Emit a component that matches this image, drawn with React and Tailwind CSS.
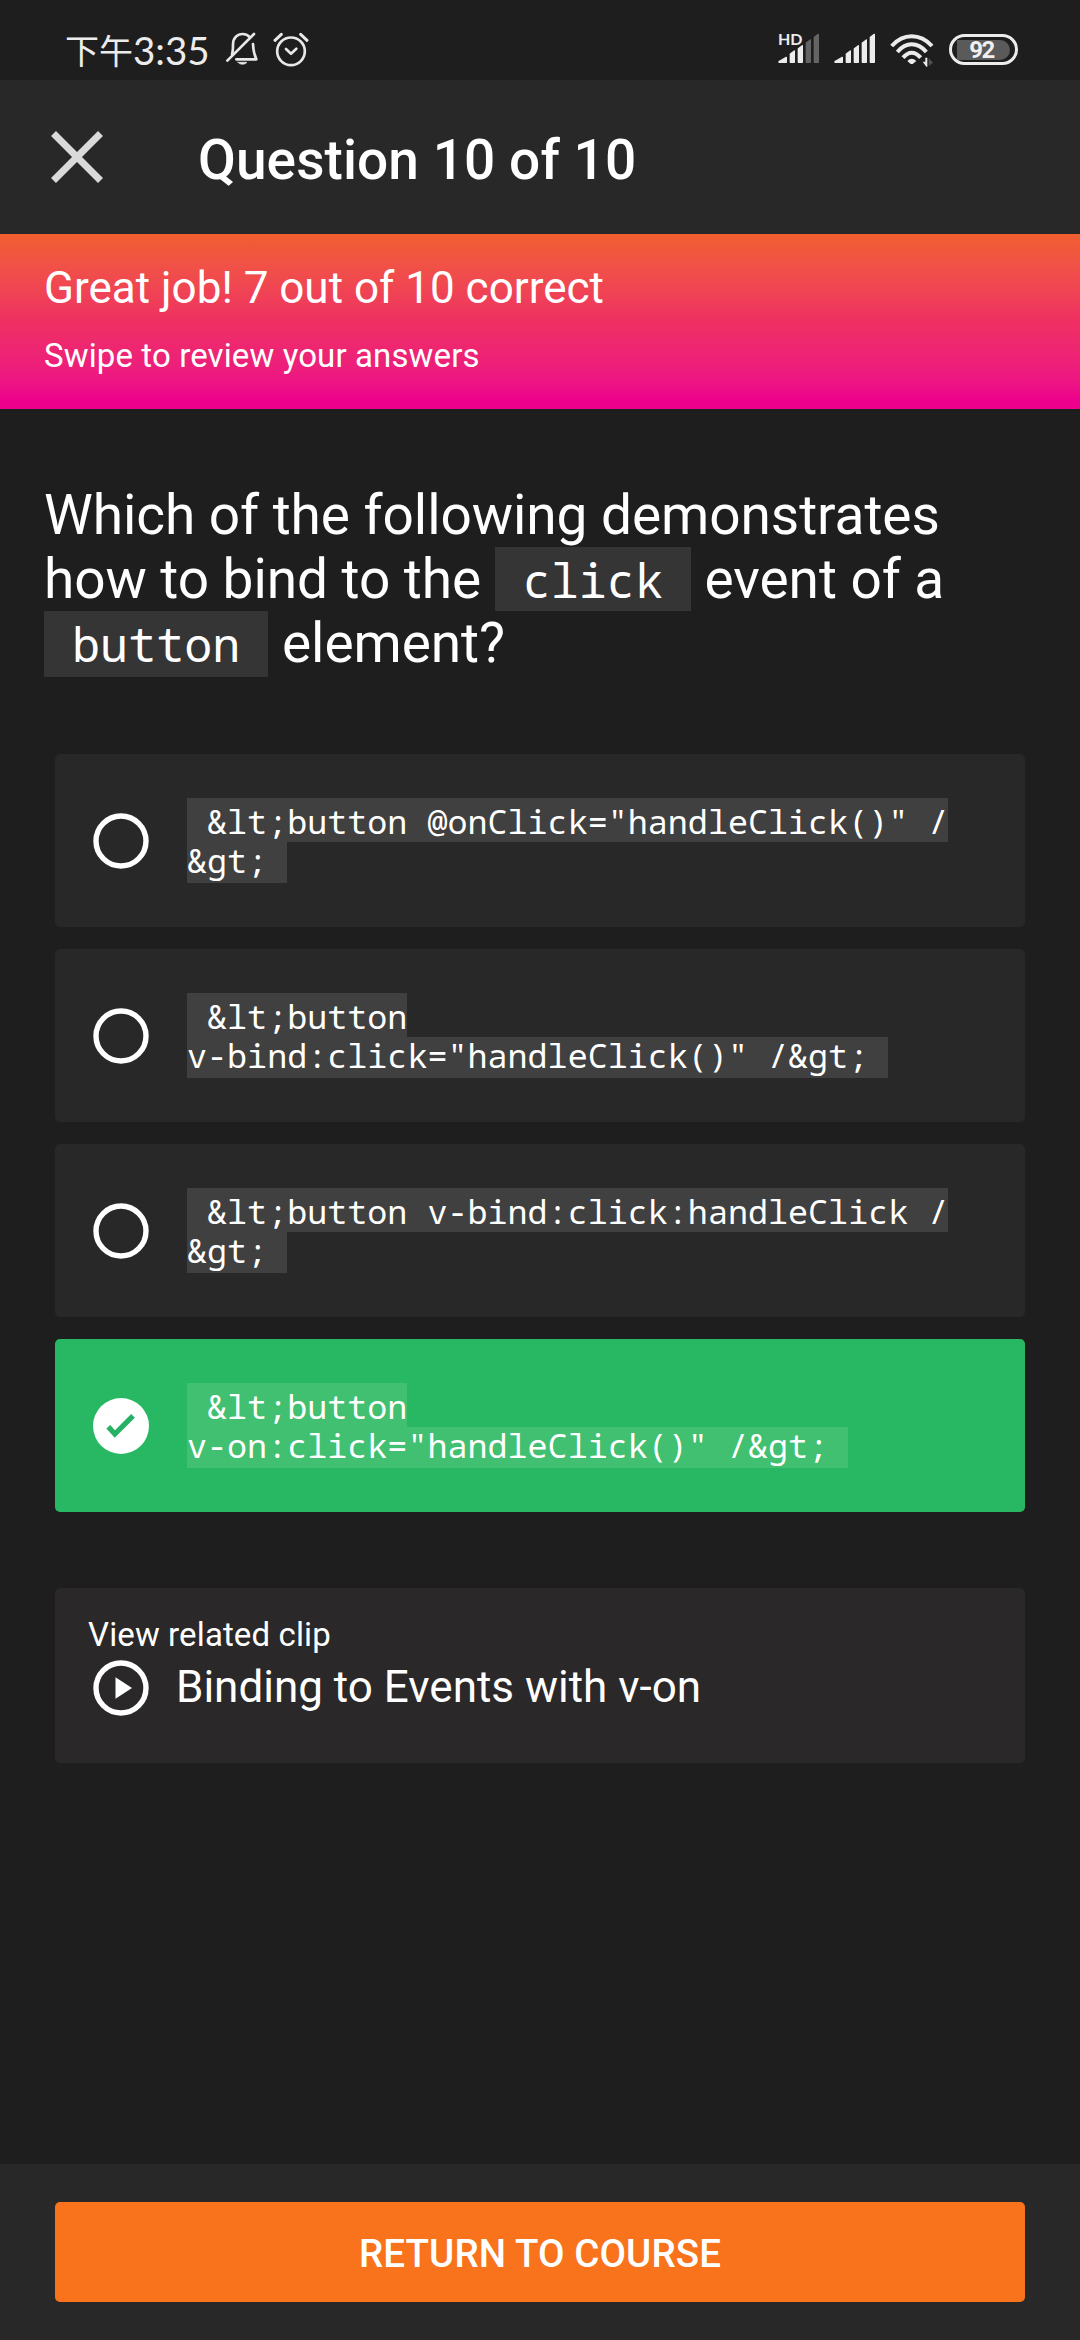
const MONO = "font-['Noto_Sans_Mono','DejaVu_Sans_Mono',monospace]";

const ANSWERS = [
  { lines: [' &lt;button @onClick="handleClick()" /', '&gt; '], correct: false },
  { lines: [' &lt;button', 'v-bind:click="handleClick()" /&gt; '], correct: false },
  { lines: [' &lt;button v-bind:click:handleClick /', '&gt; '], correct: false },
  { lines: [' &lt;button', 'v-on:click="handleClick()" /&gt; '], correct: true },
];

function MutedBell() {
  return (
    <svg className="ml-[16px] h-[34px] w-[32px]" viewBox="499 40 96 102" fill="none" stroke="#e8e8e8" strokeWidth="8" strokeLinecap="round" strokeLinejoin="round">
      <path d="M517 106 Q520 98 520 78 C520 56 534 46 549 46 C558 46 566 50 571 56" />
      <path d="M503 126 L583 46" />
      <path d="M580 76 Q581 102 590 122 H530" />
      <path d="M535 131 H562 Q558 137 548 137 Q539 137 535 131Z" fill="#e8e8e8" strokeWidth="2" />
    </svg>
  );
}

function AlarmClock() {
  return (
    <svg className="ml-[15.5px] h-[35px] w-[36px]" viewBox="642 38 108 105" fill="none" stroke="#e8e8e8" strokeWidth="8" strokeLinecap="round" strokeLinejoin="round">
      <circle cx="696" cy="96" r="41.5" />
      <path d="M648 63 L667 45 M725 45 L744 63" strokeWidth="9" />
      <path d="M681 89 L696 103 L712 88" />
    </svg>
  );
}

const BARS = [
  { x: 24, w: 22, l: 125, r: 112 },
  { x: 58, w: 12, l: 102, r: 93 },
  { x: 82, w: 12, l: 86, r: 77 },
  { x: 106, w: 12, l: 69, r: 60 },
  { x: 130, w: 12, l: 52, r: 43 },
];

function Signal({ strength }) {
  return (
    <svg className="h-[31px] w-[41px]" viewBox="21 39 123 93">
      {BARS.map((b, i) => (
        <path
          key={b.x}
          d={`M${b.x} ${b.l} L${b.x + b.w} ${b.r} V127 H${b.x} Z`}
          fill={i < strength ? '#ececec' : '#646464'}
          stroke={i < strength ? '#ececec' : '#646464'}
          strokeWidth="4"
          strokeLinejoin="round"
        />
      ))}
    </svg>
  );
}

function Wifi() {
  return (
    <svg className="ml-[15px] h-[34px] w-[44px]" viewBox="358 38 132 102" fill="none" stroke="#ececec" strokeWidth="12">
      <path d="M363 77 Q390 48 423 48 Q457 48 484 77" />
      <path d="M380 95 Q400 72 423 72 Q447 72 467 95" />
      <path d="M397 112 Q410 97 423 97 Q437 97 450 112" />
      <path d="M410 122 Q423 108 437 122 L426 131 H420 Z" fill="#ececec" stroke="none" />
      <path d="M464 112 H470 V139 H467 L456 124 H464 Z" fill="#ececec" stroke="none" />
      <path d="M474 113 L487 127 L474 137 Z" fill="#505050" stroke="none" />
    </svg>
  );
}

function Battery() {
  return (
    <div className="ml-[15px] mt-[1px] flex h-[31px] w-[69px] items-center justify-center rounded-full border-[3px] border-[#ececec]">
      <div className="flex h-[20px] w-[53px] items-center justify-center rounded-r-full bg-[#5a5a5a] pr-[4px] font-['Roboto',sans-serif] text-[24px] leading-[20px] font-bold tracking-[-1.5px] text-[#f0f0f0]">
        92
      </div>
    </div>
  );
}

function StatusBar() {
  return (
    <div className="flex h-20 items-start pt-[32px] pr-[62px] pl-[65px] text-[#ececec]">
      <div className="flex h-[35px] items-center leading-[34px]">
        <span className="font-['Noto_Sans_CJK_SC',sans-serif] text-[34px]">下午</span>
        <span className="font-['Lato',sans-serif] text-[38.5px]">3:35</span>
      </div>
      <MutedBell />
      <AlarmClock />
      <div className="ml-auto flex items-start pt-px">
        <div className="relative">
          <Signal strength={3} />
          <span className="absolute -top-[2px] left-0 font-['Lato',sans-serif] text-[16px] leading-[16px] font-bold">HD</span>
        </div>
        <div className="ml-[15px]">
          <Signal strength={5} />
        </div>
        <Wifi />
        <Battery />
      </div>
    </div>
  );
}

function Code({ className, children }) {
  return <span className={`inline-block bg-[#353535] align-top text-[46.75px] leading-[66px] tracking-normal ${MONO} ${className}`}>{children}</span>;
}

function Radio({ checked }) {
  return (
    <svg className="h-[56px] w-[56px] shrink-0" viewBox="0 0 56 56" fill="none">
      {checked ? (
        <>
          <circle cx="28" cy="28" r="28" fill="#fff" />
          <path d="M15.3 28.8 L21.8 36 L40 17.8" stroke="#27b165" strokeWidth="5.2" />
        </>
      ) : (
        <circle cx="28" cy="28" r="25" stroke="#fff" strokeWidth="5.4" />
      )}
    </svg>
  );
}

function Answer({ lines, correct }) {
  return (
    <li className={`flex h-[173px] items-center gap-[38px] rounded-[5px] pl-[38px] ${correct ? 'bg-[#28b864]' : 'bg-[#282828]'}`}>
      <Radio checked={correct} />
      <div className={`flex flex-col items-start text-[33.4px] whitespace-pre ${MONO}`}>
        <code className={`h-[44px] font-[inherit] leading-[46px] ${correct ? 'bg-[#40c070]' : 'bg-[#404040]'}`}>{lines[0]}</code>
        <code className={`h-[41px] font-[inherit] leading-[36px] ${correct ? 'bg-[#40c070]' : 'bg-[#404040]'}`}>{lines[1]}</code>
      </div>
    </li>
  );
}

export default function App() {
  return (
    <div className="flex h-[2340px] w-[1080px] flex-col bg-[#1e1e1e] font-['Roboto',sans-serif] text-white">
      <StatusBar />
      <header className="flex h-[154px] items-center bg-[#282828] pl-[51px]">
        <svg className="h-[52px] w-[52px]" viewBox="0 0 52 52" stroke="#dadada" strokeWidth="7">
          <path d="M2.5 2.5 L49.5 49.5 M49.5 2.5 L2.5 49.5" />
        </svg>
        <h1 className="ml-[95px] pt-[6px] text-[55px] leading-[64px] font-medium tracking-[0.07px]">Question 10 of 10</h1>
      </header>

      <section className="h-[175px] bg-linear-to-b from-[#f15f2e] via-[#ef2f62] via-50% to-[#ec008c] to-95% pt-[28px] pl-[44px]">
        <p className="text-[44px] leading-[52px]">Great job! 7 out of 10 correct</p>
        <p className="mt-[22px] text-[33px] leading-[40px] tracking-[0.12px]">Swipe to review your answers</p>
      </section>

      <main className="flex grow flex-col">
        <h2 className="mt-[74px] pl-[44px] text-[55px] leading-[64px] font-normal tracking-[-0.07px] whitespace-pre">
          <div className="h-16">Which of the following demonstrates</div>
          <div className="h-16">how to bind to the <Code className="h-[64px]"> click </Code> event of a</div>
          <div className="h-16"><Code className="h-[66px]"> button </Code> element?</div>
        </h2>

        <ul className="mx-[55px] mt-[79px] flex flex-col gap-[22px]">
          {ANSWERS.map((a, i) => (
            <Answer key={i} {...a} />
          ))}
        </ul>

        <section className="mx-[55px] mt-[76px] h-[175px] rounded-[5px] bg-[#2a2829] pt-[27px] pl-[33px]">
          <p className="text-[33px] leading-[40px] tracking-[0.12px]">View related clip</p>
          <div className="mt-[5px] flex items-center gap-[27px] pl-[5px]">
            <svg className="h-[56px] w-[56px]" viewBox="0 0 56 56" fill="none">
              <circle cx="28" cy="28" r="25" stroke="#fff" strokeWidth="5.4" />
              <path d="M22.5 17.2 L39 28 L22.5 38.8 Z" fill="#fff" />
            </svg>
            <span className="pb-[2px] text-[44px] leading-[52px]">Binding to Events with v-on</span>
          </div>
        </section>
      </main>

      <footer className="h-[176px] bg-[#282828] px-[55px] pt-[38px]">
        <button className="flex h-[100px] w-full items-center justify-center rounded-[5px] bg-[#f8731b] pt-[3px] text-[38.5px] font-medium tracking-[0.1px]">
          RETURN TO COURSE
        </button>
      </footer>
    </div>
  );
}
